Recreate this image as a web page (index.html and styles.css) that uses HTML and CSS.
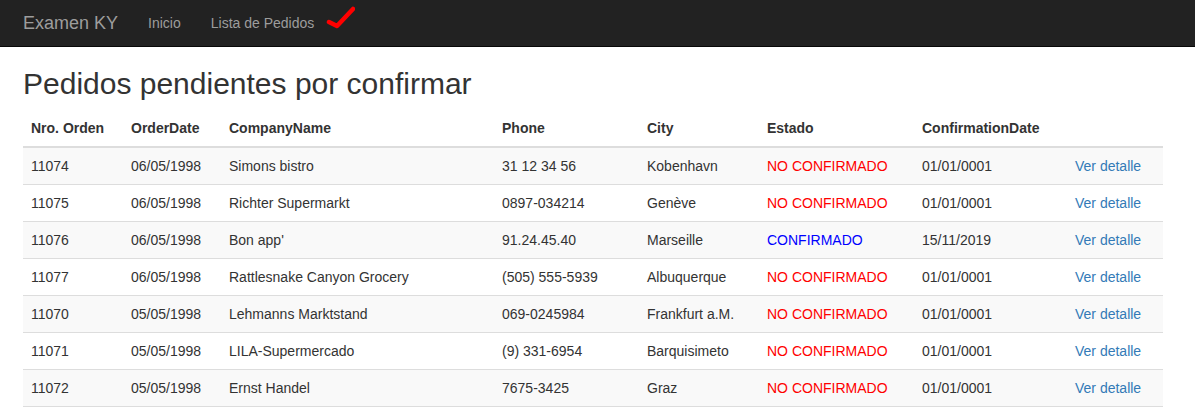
FILE: index.html
```html
<!DOCTYPE html>
<html lang="es">
<head>
<meta charset="utf-8">
<title>Lista de Pedidos</title>
<link rel="stylesheet" href="styles.css">
</head>
<body>
<nav class="navbar">
  <a class="brand" href="#">Examen KY</a>
  <ul class="nav">
    <li><a href="#">Inicio</a></li>
    <li class="with-check"><a href="#">Lista de Pedidos</a>
      <svg class="check" width="30" height="24" viewBox="0 0 30 24"><path d="M4 17 L12 21 L28 4" fill="none" stroke="#ff0000" stroke-width="4.5" stroke-linecap="round" stroke-linejoin="round"/></svg>
    </li>
  </ul>
</nav>
<main class="content">
  <h2 class="title">Pedidos pendientes por confirmar</h2>
  <table class="table">
    <thead>
      <tr>
        <th class="c1">Nro. Orden</th>
        <th class="c2">OrderDate</th>
        <th class="c3">CompanyName</th>
        <th class="c4">Phone</th>
        <th class="c5">City</th>
        <th class="c6">Estado</th>
        <th class="c7">ConfirmationDate</th>
        <th class="c8"></th>
      </tr>
    </thead>
    <tbody>
      <tr><td>11074</td><td>06/05/1998</td><td>Simons bistro</td><td>31 12 34 56</td><td>Kobenhavn</td><td class="no">NO CONFIRMADO</td><td>01/01/0001</td><td><a href="#">Ver detalle</a></td></tr>
      <tr><td>11075</td><td>06/05/1998</td><td>Richter Supermarkt</td><td>0897-034214</td><td>Genève</td><td class="no">NO CONFIRMADO</td><td>01/01/0001</td><td><a href="#">Ver detalle</a></td></tr>
      <tr><td>11076</td><td>06/05/1998</td><td>Bon app'</td><td>91.24.45.40</td><td>Marseille</td><td class="yes">CONFIRMADO</td><td>15/11/2019</td><td><a href="#">Ver detalle</a></td></tr>
      <tr><td>11077</td><td>06/05/1998</td><td>Rattlesnake Canyon Grocery</td><td>(505) 555-5939</td><td>Albuquerque</td><td class="no">NO CONFIRMADO</td><td>01/01/0001</td><td><a href="#">Ver detalle</a></td></tr>
      <tr><td>11070</td><td>05/05/1998</td><td>Lehmanns Marktstand</td><td>069-0245984</td><td>Frankfurt a.M.</td><td class="no">NO CONFIRMADO</td><td>01/01/0001</td><td><a href="#">Ver detalle</a></td></tr>
      <tr><td>11071</td><td>05/05/1998</td><td>LILA-Supermercado</td><td>(9) 331-6954</td><td>Barquisimeto</td><td class="no">NO CONFIRMADO</td><td>01/01/0001</td><td><a href="#">Ver detalle</a></td></tr>
      <tr><td>11072</td><td>05/05/1998</td><td>Ernst Handel</td><td>7675-3425</td><td>Graz</td><td class="no">NO CONFIRMADO</td><td>01/01/0001</td><td><a href="#">Ver detalle</a></td></tr>
    </tbody>
  </table>
</main>
</body>
</html>
```
FILE: styles.css
```css
* { box-sizing: border-box; }
html, body { margin: 0; padding: 0; }
body {
  font-family: "Liberation Sans", Arial, Helvetica, sans-serif;
  font-size: 14px;
  line-height: 20px;
  color: #333;
  background: #fff;
}
a { color: #337ab7; text-decoration: none; }

.navbar {
  height: 47px;
  background: #222;
  border-bottom: 1px solid #080808;
  display: flex;
  align-items: center;
  padding-left: 23px;
}
.brand {
  font-size: 18px;
  line-height: 20px;
  color: #9d9d9d;
  margin-right: 15px;
}
.nav {
  list-style: none;
  margin: 0;
  padding: 0;
  display: flex;
  align-items: center;
}
.nav li { display: flex; align-items: center; }
.nav a {
  color: #9d9d9d;
  font-size: 14px;
  padding: 0 15px;
}
.with-check .check {
  margin-left: -4px;
  margin-top: -12px;
}

.content {
  padding: 0 32px 0 23px;
}
.title {
  margin: 20px 0 10px;
  font-size: 30px;
  font-weight: 500;
  line-height: 33px;
  color: #333;
}
.table {
  width: 1140px;
  border-collapse: collapse;
  border-spacing: 0;
  border-bottom: 1px solid #ddd;
}
.table th, .table td {
  padding: 8px;
  text-align: left;
  vertical-align: top;
  line-height: 20px;
}
.table th {
  font-weight: bold;
  border-bottom: 2px solid #ddd;
}
.table td { border-top: 1px solid #ddd; }
.table thead tr:first-child th { border-top: 0; }
.table tbody tr:first-child td { border-top: 0; }
.table tbody tr:nth-child(odd) { background: #f9f9f9; }
.c1 { width: 100px; }
.c2 { width: 98px; }
.c3 { width: 273px; }
.c4 { width: 145px; }
.c5 { width: 120px; }
.c6 { width: 155px; }
.c7 { width: 153px; }
.no { color: #ff0000; }
.yes { color: #0000ff; }
```
